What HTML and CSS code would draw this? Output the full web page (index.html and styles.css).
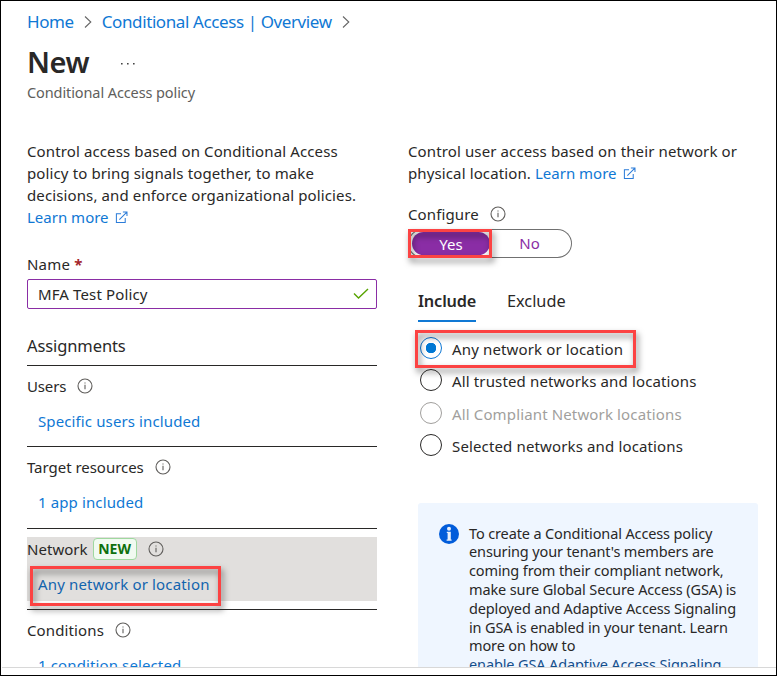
FILE: index.html
```html
<!DOCTYPE html>
<html lang="en">
<head>
<meta charset="utf-8">
<title>New - Conditional Access policy</title>
<link rel="stylesheet" href="styles.css">
</head>
<body>
<svg class="defs" width="0" height="0" aria-hidden="true">
  <symbol id="info" viewBox="0 0 16 16"><circle cx="8" cy="8" r="7" fill="none" stroke="#605e5c" stroke-width="1.1"/><path d="M8 6.8V11.3M8 4.4V5.6" stroke="#605e5c" stroke-width="1.1"/></symbol>
  <symbol id="external" viewBox="0 0 14 14"><path d="M6.5 3H1.5V12.5H11V7.5M4.7 9.3L12.5 1.5M8.5 1.1H12.9V5.5" fill="none" stroke="#2b7cd9" stroke-width="1.1"/></symbol>
  <symbol id="chevron" viewBox="0 0 8 14"><path d="M1 1.5L6.8 7L1 12.5" fill="none" stroke="#666" stroke-width="1.1"/></symbol>
</svg>
<div class="window">
  <div class="viewport">
    <nav class="crumbs">
      <a>Home</a><svg class="chevron"><use href="#chevron"/></svg>
      <a>Conditional Access | Overview</a><svg class="chevron"><use href="#chevron"/></svg>
    </nav>
    <header class="title">
      <h1>New</h1>
      <svg class="more" width="16" height="4" viewBox="0 0 16 4"><path d="M1 1h1.6v1.6H1zM7 1h1.6v1.6H7zM13 1h1.6v1.6H13z" fill="#444"/></svg>
    </header>
    <p class="subtitle">Conditional Access policy</p>
    <main class="columns">
      <section class="left">
        <p class="intro">Control access based on Conditional Access<br>policy to bring signals together, to make<br>decisions, and enforce organizational policies.<br><a>Learn more</a><svg class="ext"><use href="#external"/></svg></p>
        <label class="name-label">Name <b>*</b></label>
        <div class="field"><span>MFA Test Policy</span><svg width="16" height="12" viewBox="0 0 16 12"><path d="M1 5.5L5.5 10L15 1" fill="none" stroke="#57a300" stroke-width="1.4"/></svg></div>
        <h2>Assignments</h2>
        <div class="setting">
          <div class="row users">Users<svg class="info"><use href="#info"/></svg></div>
          <a class="value">Specific users included</a>
        </div>
        <div class="setting tall">
          <div class="row target">Target resources<svg class="info"><use href="#info"/></svg></div>
          <a class="value">1 app included</a>
        </div>
        <div class="setting active">
          <div class="row">Network<span class="badge">NEW</span><svg class="info"><use href="#info"/></svg></div>
          <a class="value">Any network or location</a>
          <i class="callout callout-network"></i>
        </div>
        <div class="setting">
          <div class="row conditions">Conditions<svg class="info"><use href="#info"/></svg></div>
          <a class="value">1 condition selected</a>
        </div>
      </section>
      <section class="right">
        <p class="intro">Control user access based on their network or<br>physical location. <a>Learn more</a><svg class="ext"><use href="#external"/></svg></p>
        <div class="row configure">Configure<svg class="info"><use href="#info"/></svg></div>
        <div class="toggle"><span class="on">Yes</span><span class="off">No</span><i class="callout callout-yes"></i></div>
        <div class="tabs"><span class="tab selected">Include</span><span class="tab">Exclude</span></div>
        <div class="radios">
          <div class="radio checked"><i class="dot"></i><span>Any network or location</span><i class="callout callout-any"></i></div>
          <div class="radio"><i class="dot"></i><span>All trusted networks and locations</span></div>
          <div class="radio disabled"><i class="dot"></i><span>All Compliant Network locations</span></div>
          <div class="radio"><i class="dot"></i><span>Selected networks and locations</span></div>
        </div>
        <aside class="notice">
          <svg width="20" height="20" viewBox="0 0 20 20"><circle cx="10" cy="10" r="10" fill="#015cda"/><path d="M7.8 7.8H11.8V15.6H12.6V16.8H7.6V15.6H8.6V9H7.8z" fill="#e8f0fc"/><circle cx="10" cy="4.8" r="2" fill="#e8f0fc"/></svg>
          <p>To create a Conditional Access policy<br>ensuring your tenant's members are<br>coming from their compliant network,<br>make sure Global Secure Access (GSA) is<br>deployed and Adaptive Access Signaling<br>in GSA is enabled in your tenant. Learn<br>more on how to<br><a>enable GSA Adaptive Access Signaling</a></p>
        </aside>
      </section>
    </main>
  </div>
</div>
</body>
</html>
```

FILE: styles.css
```css
* { box-sizing: border-box; }
body {
  margin: 0;
  background: #fff;
  color: #292827;
  font: 15px/22px "Noto Sans", "Open Sans", sans-serif;
  white-space: nowrap;
}
h1, h2, p { margin: 0; font-weight: 400; }
a { color: #0f78d4; text-decoration: none; }
svg { flex: none; }
.defs { position: absolute; }

.window { width: 777px; height: 676px; border: 1px solid #000; padding-left: 1px; overflow: hidden; }
.viewport { height: 667px; border-bottom: 1px solid #d8d8d8; padding-left: 25px; overflow: hidden; }

.crumbs { display: flex; align-items: center; height: 24px; margin-top: 9px; font-size: 17px; letter-spacing: -.4px; }
.chevron { width: 8px; height: 14px; margin: 0 10px 0 10px; }
.title { display: flex; align-items: center; height: 42px; margin-top: 7px; }
.title h1 { font-size: 29px; line-height: 42px; font-weight: 600; letter-spacing: -.4px; }
.more { margin: 3px 0 0 31px; }
.subtitle { color: #605e5c; font-size: 14.5px; height: 22px; margin-top: -2px; letter-spacing: -.1px; }

.columns { display: grid; grid-template-columns: 350px 350px; column-gap: 31px; margin-top: 37px; }
.intro { letter-spacing: .12px; }
.intro a { letter-spacing: 0; }
.ext { width: 13px; height: 13px; margin-left: 6px; vertical-align: -1px; }
.name-label { display: block; margin-top: 25px; letter-spacing: .2px; }
.name-label b { color: #a4262c; }
.field {
  display: flex; align-items: center; justify-content: space-between;
  height: 30px; margin-top: 4px; padding: 0 7px 0 10px; letter-spacing: .13px;
  border: 1px solid #8a2da5; border-radius: 2px;
}
h2 { height: 22px; margin: 26px 0 8px; font-size: 16.5px; letter-spacing: -.1px; }

.setting { position: relative; height: 81px; padding-top: 9px; border-top: 1px solid #292827; }
.setting.tall { height: 82px; }
.row { display: flex; align-items: center; height: 22px; letter-spacing: .04px; }
.users { letter-spacing: -.15px; }
.target { letter-spacing: -.03px; }
.conditions { letter-spacing: .12px; }
.info { width: 16px; height: 16px; margin: 0 0 0 11px; }
.value { display: block; margin: 13px 0 0 11px; letter-spacing: .12px; }
.active::before { content: ""; position: absolute; inset: 8px 0 8px; background: #e1dfdd; }
.active > * { position: relative; }
.active .value { color: #1264ae; letter-spacing: .16px; }
.badge {
  width: 44px; height: 22px; margin-left: 5px; line-height: 20px; text-align: center;
  border: 1px solid #9fd89f; border-radius: 4px; background: #f1faf1;
  color: #0e700e; font-size: 14px; font-weight: 700;
}

.callout, .active > .callout {
  position: absolute; border: 3px solid #fc4343;
  filter: drop-shadow(2px 4px 3px rgba(0, 0, 0, .5));
}
.active > .callout-network { left: 3px; top: 37px; width: 191px; height: 40px; }
.callout-yes { left: 0; top: 0; width: 84px; height: 29px; }
.callout-any { left: -3px; top: -1px; width: 221px; height: 38px; }

.configure { margin-top: 19px; letter-spacing: .12px; }
.toggle {
  position: relative; display: flex; width: 164px; height: 29px; margin-top: 4px;
  border-radius: 15px; box-shadow: inset 0 0 0 1px #707070; line-height: 29px; text-align: center;
}
.on { width: 78px; height: 23px; margin: 3px 0 0 4px; line-height: 24px; border-radius: 12px; background: #8a2da5; color: #fff; }
.off { width: 79px; color: #8a2da5; }
.tabs { display: flex; gap: 31px; height: 34px; margin: 30px 0 0 10px; font-size: 16.3px; line-height: 26px; }
.tab { height: 34px; }
.selected { width: 58px; font-weight: 600; letter-spacing: -.15px; border-bottom: 2px solid #0f78d4; }
.radios { margin: 9px 0 0 10px; }
.radio { position: relative; display: flex; height: 32.4px; padding-top: 7px; letter-spacing: .14px; }
.radio .dot { width: 22px; height: 22px; margin: -1px 10px 0 2px; border: 1px solid #292827; border-radius: 50%; }
.checked .dot { border-color: #0f78d4; background: radial-gradient(circle, #0078d4 5px, #fff 5.5px); }
.disabled { color: #a19f9d; }
.disabled .dot { border-color: #a19f9d; }
.notice { display: flex; width: 340px; margin: 42px 0 0 10px; padding: 21px; background: #eff6ff; border-radius: 3px; }
.notice p { margin-left: 10px; font-size: 14.5px; line-height: 18.8px; letter-spacing: -.13px; }
.notice a { color: #154f8c; }
```
